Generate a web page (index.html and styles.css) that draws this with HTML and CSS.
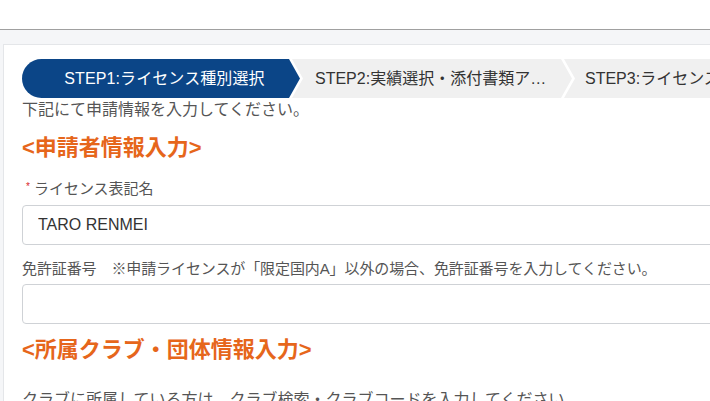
FILE: index.html
```html
<!DOCTYPE html>
<html lang="ja">
<head>
    <meta charset="UTF-8">
    <title>ライセンス申請</title>
    <link rel="stylesheet" href="styles.css">
</head>
<body>

<header class="header"></header>

<main class="main">
    <div class="card">
        <ol class="steps">
            <li class="step step-first active">STEP1:ライセンス種別選択</li>
            <li class="step">STEP2:実績選択・添付書類アップロード</li>
            <li class="step step-last">STEP3:ライセンス申請内容確認</li>
        </ol>

        <p class="intro">下記にて申請情報を入力してください。</p>

        <h2 class="section-title">&lt;申請者情報入力&gt;</h2>

        <label class="field-label" for="license-name"><span class="required">*</span>ライセンス表記名</label>
        <input class="field" id="license-name" type="text" value="TARO RENMEI">

        <label class="field-label field-label-note" for="license-no">免許証番号　※申請ライセンスが「限定国内A」以外の場合、免許証番号を入力してください。</label>
        <input class="field field-second" id="license-no" type="text">

        <h2 class="section-title">&lt;所属クラブ・団体情報入力&gt;</h2>

        <p class="club-note">クラブに所属している方は、クラブ検索・クラブコードを入力してください。</p>
    </div>
</main>

</body>
</html>
```

FILE: styles.css
```css
* {
    box-sizing: border-box;
}

html,
body {
    overflow: hidden;
}

body {
    margin: 0;
    font-family: "Liberation Sans", "Noto Sans CJK JP", sans-serif;
    color: #555;
    background: #fff;
}

.header {
    height: 30px;
    border-bottom: 1px solid #a0a0a0;
    background: #fff;
}

.main {
    width: 1100px;
    padding: 14px 0 0 3px;
    background: #f5f6f8;
}

.card {
    display: flex;
    flex-direction: column;
    align-items: flex-start;
    padding: 14px 0 40px 18px;
    background: #fff;
    border: 1px solid #e4e6e9;
    border-right: none;
}

.steps {
    display: flex;
    margin: 0;
    padding: 0;
    list-style: none;
    height: 39px;
}

.step {
    display: block;
    width: 280px;
    height: 100%;
    margin-left: -8px;
    padding: 0 25px 0 23px;
    font-size: 16px;
    line-height: 39px;
    color: #333;
    background: #f0f0f0;
    white-space: nowrap;
    overflow: hidden;
    text-overflow: ellipsis;
    clip-path: polygon(0 0, calc(100% - 11px) 0, 100% 50%, calc(100% - 11px) 100%, 0 100%, 11px 50%);
}

.step-first {
    width: 278px;
    margin-left: 0;
    padding: 0 0 0 7px;
    text-align: center;
    letter-spacing: 0.1px;
    border-radius: 20px 0 0 20px;
    clip-path: polygon(0 0, calc(100% - 11px) 0, 100% 50%, calc(100% - 11px) 100%, 0 100%);
}

.step-last {
    width: 300px;
    padding-left: 21px;
    text-overflow: clip;
}

.step.active {
    background: #0b4587;
    color: #fff;
}

.intro {
    margin: 0;
    font-size: 16px;
    line-height: 24px;
}

.section-title {
    margin: 11px 0 0;
    font-size: 22px;
    line-height: 30px;
    font-weight: bold;
    color: #e6661b;
}

.field-label {
    display: flex;
    align-items: flex-start;
    margin-top: 16px;
    font-size: 15px;
    line-height: 20px;
    color: #555;
}

.field-label-note {
    margin-top: 14px;
    letter-spacing: -0.1px;
}

.required {
    margin: 1px 4px 0 4px;
    font-size: 10px;
    line-height: 14px;
    color: #d9262b;
}

.field {
    width: 900px;
    height: 40px;
    margin-top: 6px;
    padding: 0 15px;
    font-family: "Liberation Sans", "Noto Sans CJK JP", sans-serif;
    font-size: 16px;
    color: #333;
    background: #fff;
    border: 1px solid #cfd2d6;
    border-radius: 4px;
}

.field-second {
    margin-top: 5px;
}

.club-note {
    margin: 23px 0 0;
    font-size: 16px;
    line-height: 24px;
}
```
